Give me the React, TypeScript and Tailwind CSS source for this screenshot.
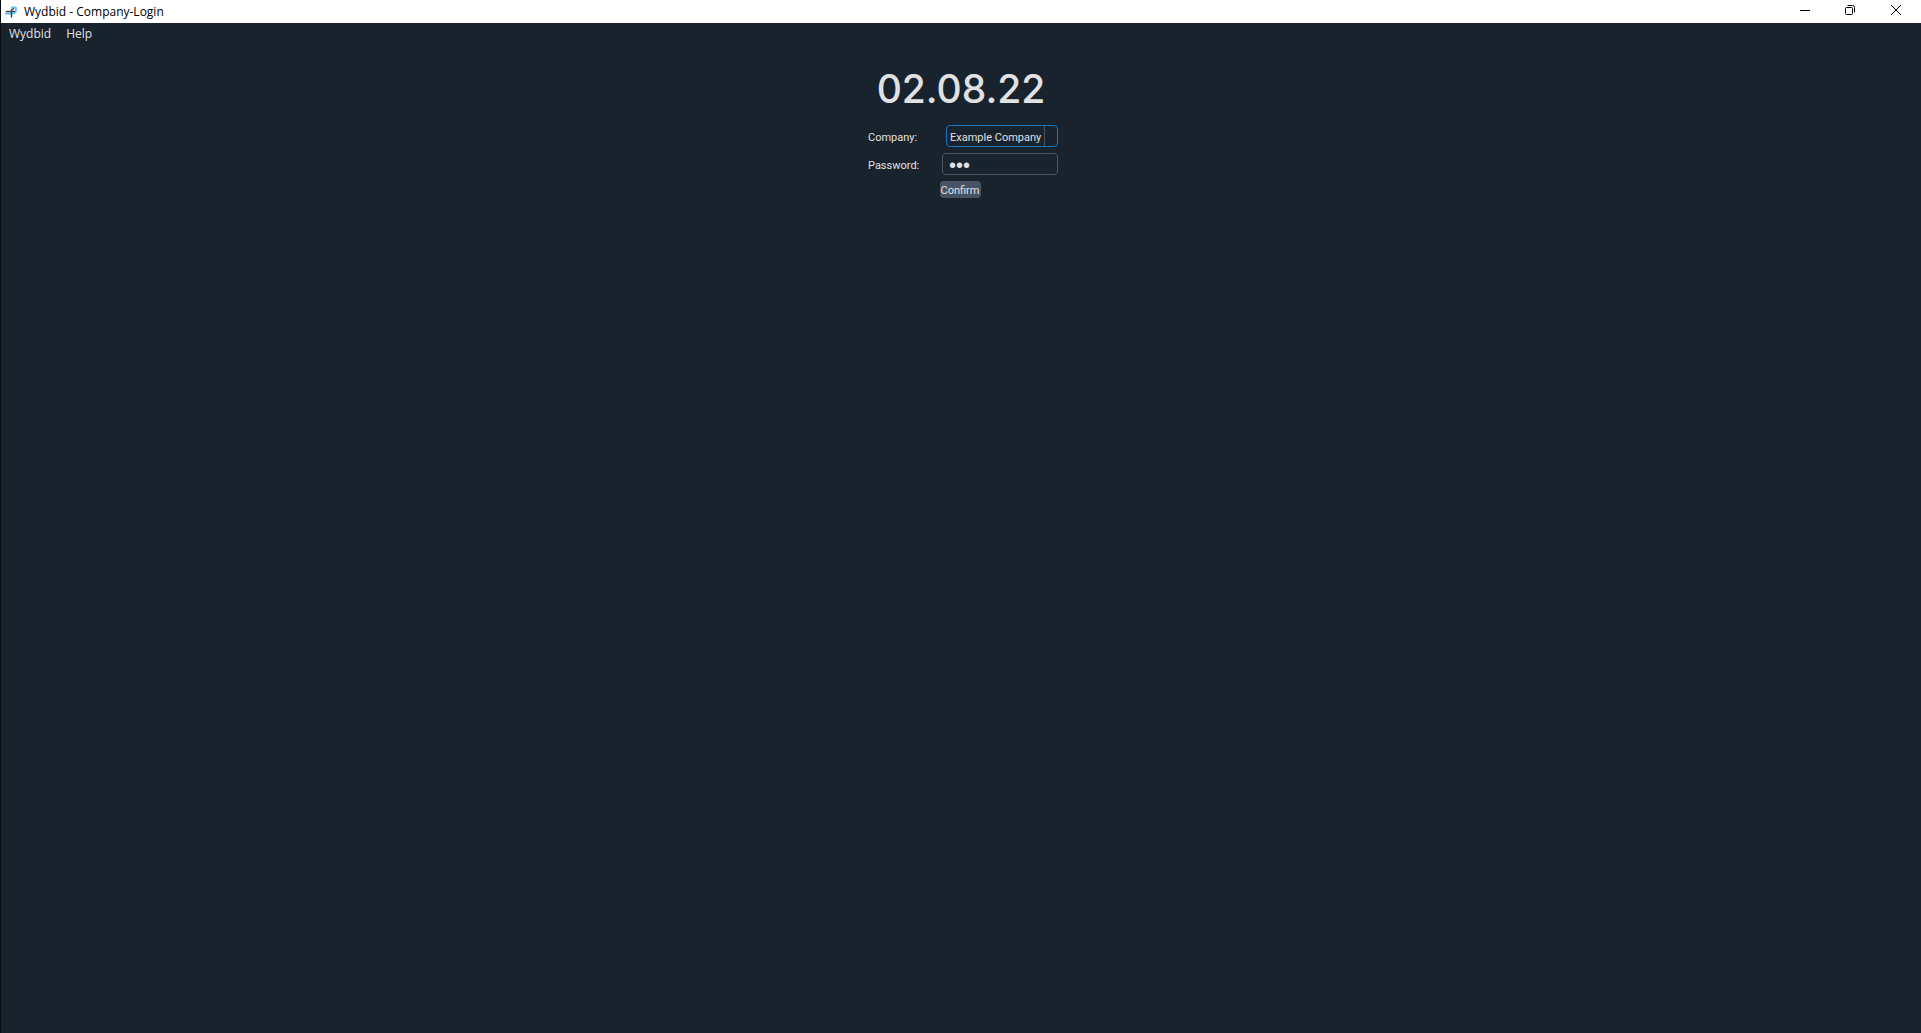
import { useState } from "react";

function AppIcon() {
  return (
    <svg viewBox="0 0 12 14" className="h-3.5 w-3" fill="none" aria-hidden="true">
      <path d="M0 8.500h6M7 8.500c2 0 4-1 4-4V2" stroke="#62c3f0" strokeWidth="1.800" />
      <path d="M6 2.500h5" stroke="#62c3f0" strokeWidth="2" />
      <path d="M1 6.500h9" stroke="#39454f" strokeWidth="1.400" />
      <path d="M9 3.500L6.500 5v7.500" stroke="#39454f" strokeWidth="1.400" />
    </svg>
  );
}

function TitleBar() {
  return (
    <header className="flex h-[23px] items-center justify-between bg-white text-black">
      <div className="flex items-center gap-1.5 pl-1">
        <AppIcon />
        <h1 className="pl-px text-[12px] leading-4">Wydbid - Company-Login</h1>
      </div>
      <div className="flex h-full pr-0.5 pb-[3px]">
        <button type="button" aria-label="Minimize" className="flex w-[45px] items-center justify-center">
          <svg viewBox="0 0 10 10" className="size-2.5" fill="none" stroke="currentColor">
            <path d="M0 5.500h10" />
          </svg>
        </button>
        <button type="button" aria-label="Restore" className="flex w-[46px] items-center justify-center">
          <svg viewBox="0 0 10 10" className="size-2.5" fill="none" stroke="currentColor">
            <rect x=".5" y="2.500" width="7" height="7" rx="1" />
            <path d="M2.500.5H7.500a2 2 0 0 1 2 2V7.500" />
          </svg>
        </button>
        <button type="button" aria-label="Close" className="flex w-[46px] items-center justify-center">
          <svg viewBox="0 0 10 10" className="size-2.5" fill="none" stroke="currentColor">
            <path d="M0 0l10 10M10 0L0 10" />
          </svg>
        </button>
      </div>
    </header>
  );
}

export default function App() {
  const [password, setPassword] = useState("abc");

  return (
    <div className="flex min-h-screen flex-col border-l border-[#060c16] bg-[#19232d] font-['Open_Sans','Noto_Sans',sans-serif] text-[#e0e1e3]">
      <TitleBar />
      <nav className="flex gap-[15px] px-2 py-[3px] text-[12px] leading-4">
        <button type="button">Wydbid</button>
        <button type="button">Help</button>
      </nav>
      <main className="flex flex-col items-center pt-[21px] font-['Roboto',sans-serif] text-[11px] leading-4">
        <h2 className="font-['Inter',sans-serif] text-[39px] leading-[46px] font-medium">02.08.22</h2>
        <form className="mt-[13px] flex w-[194px] flex-col gap-1.5" onSubmit={(e) => e.preventDefault()}>
          <div className="flex items-center justify-between pl-1">
            <label htmlFor="company" className="pt-1">
              Company:
            </label>
            <div className="relative w-[112px]">
              <select
                id="company"
                className="block h-[22px] w-full appearance-none rounded border border-[#1a72bb] bg-transparent pt-1 pl-[3px] outline-none"
              >
                <option>Example Company</option>
              </select>
              <span className="pointer-events-none absolute inset-y-px right-[13px] w-px bg-[#455364]" />
            </div>
          </div>
          <div className="flex items-center justify-between pl-1">
            <label htmlFor="password" className="pt-1">
              Password:
            </label>
            <input
              id="password"
              type="password"
              value={password}
              onChange={(e) => setPassword(e.target.value)}
              className="h-[22px] w-[116px] rounded border border-[#455364] bg-transparent px-1.5 pt-0.5 font-['Liberation_Sans',sans-serif] text-[20px] leading-5 outline-none"
            />
          </div>
          <button type="submit" className="mr-0.5 h-[17px] w-[41px] self-center rounded bg-[#455364] pt-0.5">
            Confirm
          </button>
        </form>
      </main>
    </div>
  );
}
